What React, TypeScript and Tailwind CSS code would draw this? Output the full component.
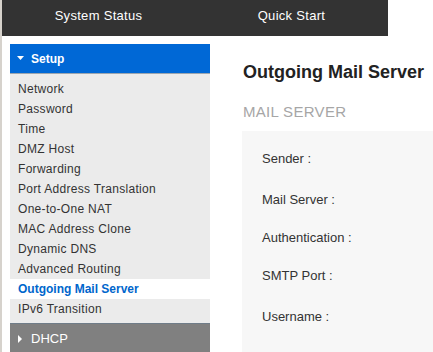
const SETUP_ITEMS = [
  "Network",
  "Password",
  "Time",
  "DMZ Host",
  "Forwarding",
  "Port Address Translation",
  "One-to-One NAT",
  "MAC Address Clone",
  "Dynamic DNS",
  "Advanced Routing",
  "Outgoing Mail Server",
  "IPv6 Transition",
];

const ACTIVE = "Outgoing Mail Server";

const FIELDS = [
  { label: "Sender :", h: "h-[41px]" },
  { label: "Mail Server :", h: "h-[38px]" },
  { label: "Authentication :", h: "h-[38px]" },
  { label: "SMTP Port :", h: "h-[41px]" },
  { label: "Username :", h: "h-[41px]" },
];

export default function App() {
  return (
    <div className="flex h-[352px] w-[433px] overflow-hidden bg-white font-['Liberation_Sans',Arial,sans-serif] text-[#333]">
      <div className="w-[2px] shrink-0 bg-[#d6d2cc]" />
      <div className="flex min-w-0 flex-1 flex-col">
        <header className="flex h-9 w-[386px] shrink-0 bg-[#333333] text-[13px] tracking-[0.3px] text-white">
          <div className="flex flex-1 items-center justify-center pb-1">System Status</div>
          <div className="flex flex-1 items-center justify-center pb-1">Quick Start</div>
        </header>

        <div className="flex flex-1 pl-2 pt-2">
          <aside className="flex w-[200px] shrink-0 flex-col">
            <div className="flex h-[29px] items-center gap-[7px] bg-[#0068d6] pl-[7px] text-[12px] font-bold text-white">
              <svg width="7" height="4" viewBox="0 0 7 4" className="mt-[-1px]">
                <path d="M0 0h7L3.5 4z" fill="#fff" />
              </svg>
              Setup
            </div>
            <div className="h-px bg-[#9ca6b0]" />
            <ul className="bg-[#ebebeb] pb-1 pt-[5px] text-[12px] tracking-[0.3px]">
              {SETUP_ITEMS.map((item) => (
                <li
                  key={item}
                  className={`h-5 whitespace-nowrap pl-2 leading-5 ${
                    item === ACTIVE ? "bg-white font-bold tracking-normal text-[#0066cc]" : "text-[#333]"
                  }`}
                >
                  {item}
                </li>
              ))}
            </ul>
            <div className="h-px bg-[#6f7c88]" />
            <div className="flex h-[29px] items-center gap-[9px] bg-[#808080] pl-[8px] text-[13px] text-white">
              <svg width="4" height="8" viewBox="0 0 4 8">
                <path d="M0 0l4 4-4 4z" fill="#fff" />
              </svg>
              DHCP
            </div>
          </aside>

          <main className="flex min-w-0 flex-1 flex-col pl-8">
            <h1 className="mt-[17px] h-[22px] whitespace-nowrap pl-px text-[18px] font-bold leading-[22px] text-[#222]">
              Outgoing Mail Server
            </h1>
            <h2 className="mt-[19px] h-5 pl-px text-[15px] leading-5 tracking-[0.3px] text-[#a6a6a6]">
              MAIL SERVER
            </h2>
            <section className="mt-[9px] flex flex-1 flex-col bg-[#f7f7f7] pl-5 pt-5 text-[13px]">
              {FIELDS.map((f) => (
                <div key={f.label} className={`${f.h} shrink-0 leading-4`}>
                  {f.label}
                </div>
              ))}
            </section>
          </main>
        </div>
      </div>
    </div>
  );
}
